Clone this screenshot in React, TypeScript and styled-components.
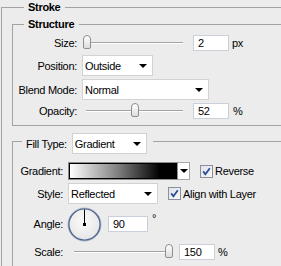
import React from 'react';
import styled, { createGlobalStyle } from 'styled-components';

const GlobalStyle = createGlobalStyle`
  html, body {
    margin: 0;
    background: #ececec;
    overflow: hidden;
  }
  body {
    font-family: 'Liberation Sans', Arial, sans-serif;
    font-size: 11px;
    letter-spacing: -0.3px;
    color: #000;
  }
`;

// the dialog continues past the visible crop, so the frame clips it
const Page = styled.div`
  box-sizing: border-box;
  width: 281px;
  height: 266px;
  padding-left: 1px;
  overflow: hidden;
`;

const Group = styled.fieldset<{ $mt?: number; $pad: string }>`
  margin: ${({ $mt }) => $mt || 0}px -30px 0 0;
  padding: ${({ $pad }) => $pad};
  border: 1px solid #a3a3a3;
  min-width: 0;
`;

const Legend = styled.legend<{ $indent: number; $bold?: boolean }>`
  margin-left: ${({ $indent }) => $indent}px;
  padding: 0 5px 0 4px;
  line-height: 14px;
  font-weight: ${({ $bold }) => ($bold ? 'bold' : 'normal')};
`;

const ControlLegend = styled.legend`
  display: flex;
  align-items: center;
  gap: 5px;
  margin-left: 9px;
  padding: 4px 6px 0 4px;
`;

const Row = styled.div<{ $h: number; $mt?: number }>`
  display: flex;
  align-items: center;
  height: ${({ $h }) => $h}px;
  margin-top: ${({ $mt }) => $mt || 0}px;
`;

const Label = styled.span<{ $w: number }>`
  width: ${({ $w }) => $w}px;
  flex-shrink: 0;
  text-align: right;
  margin-right: 5px;
  white-space: nowrap;
`;

const SelectBox = styled.div<{ $w: number; $ml?: number }>`
  display: flex;
  align-items: center;
  justify-content: space-between;
  box-sizing: border-box;
  width: ${({ $w }) => $w}px;
  height: 21px;
  margin-left: ${({ $ml }) => $ml || 0}px;
  padding: 0 5px 0 2px;
  background: #fff;
  border: 1px solid #d2d2d2;
  white-space: nowrap;
`;

const DownArrow = styled.span`
  width: 0;
  height: 0;
  border-left: 4px solid transparent;
  border-right: 4px solid transparent;
  border-top: 4px solid #000;
`;

const NumberField = styled.input<{ $w: number; $ml: number }>`
  box-sizing: border-box;
  width: ${({ $w }) => $w}px;
  height: 16px;
  margin: 0 0 0 ${({ $ml }) => $ml}px;
  padding: 0 0 0 4px;
  border: 1px solid #c9d0d8;
  background: #fff;
  font: inherit;
  letter-spacing: inherit;
  color: #000;
  outline: none;
`;

const Unit = styled.span<{ $ml: number; $top?: boolean }>`
  margin-left: ${({ $ml }) => $ml}px;
  align-self: ${({ $top }) => ($top ? 'flex-start' : 'center')};
  margin-top: ${({ $top }) => ($top ? '6px' : '0')};
`;

const SliderTrack = styled.div<{ $w: number; $ml: number }>`
  position: relative;
  width: ${({ $w }) => $w}px;
  height: 15px;
  margin-left: ${({ $ml }) => $ml}px;
  flex-shrink: 0;

  &::before {
    content: '';
    position: absolute;
    left: 3px;
    right: 0;
    top: 7px;
    height: 1px;
    background: #a4a4a4;
    border-bottom: 1px solid #fff;
  }
`;

const Thumb = styled.div`
  position: absolute;
  top: 0;
  box-sizing: border-box;
  width: 8px;
  height: 14px;
  border: 1px solid #8e8e8e;
  border-radius: 4px 4px 2px 2px;
  background: linear-gradient(#ffffff, #dcdcdc);
`;

const GradientPicker = styled.div`
  display: flex;
  height: 18px;
`;

const Swatch = styled.div`
  box-sizing: border-box;
  width: 110px;
  height: 18px;
  border: 1px solid #8c8c8c;
`;

const SwatchFill = styled.div`
  box-sizing: border-box;
  height: 100%;
  border: 1px solid #000;
  background: linear-gradient(to right, #ffffff 0%, #808080 45%, #000000 85%);
`;

const ArrowButton = styled.div`
  display: flex;
  align-items: center;
  justify-content: center;
  box-sizing: border-box;
  width: 12px;
  height: 18px;
  background: #fff;
  border: 1px solid #a8a8a8;
  border-left: none;
`;

const Check = styled.label<{ $ml: number }>`
  display: flex;
  align-items: center;
  gap: 2px;
  margin-left: ${({ $ml }) => $ml}px;
  white-space: nowrap;
`;

const Dial = styled.svg`
  margin-left: -1px;
  flex-shrink: 0;
`;

const Slider: React.FC<{ w: number; ml: number; pct: number }> = ({ w, ml, pct }) => (
  <SliderTrack $w={w} $ml={ml}>
    <Thumb style={{ left: Math.round(pct * (w - 8)) }} />
  </SliderTrack>
);

const Select: React.FC<{ w: number; ml?: number; value: string }> = ({ w, ml, value }) => (
  <SelectBox $w={w} $ml={ml}>
    <span>{value}</span>
    <DownArrow />
  </SelectBox>
);

const CheckBox: React.FC<{ ml: number; label: string }> = ({ ml, label }) => (
  <Check $ml={ml}>
    <svg width="13" height="13" viewBox="0 0 13 13">
      <defs>
        <linearGradient id="cb" x1="0" y1="0" x2="1" y2="1">
          <stop offset="0" stopColor="#dfe3ea" />
          <stop offset="1" stopColor="#f6f7f9" />
        </linearGradient>
      </defs>
      <rect x="0.5" y="0.5" width="12" height="12" fill="url(#cb)" stroke="#8a8f99" />
      <path d="M3.2 6.4 L5.4 9.2 L9.8 3.2" fill="none" stroke="#2c4c94" strokeWidth="1.8" />
    </svg>
    <span>{label}</span>
  </Check>
);

const App: React.FC = () => {
  return (
    <Page>
      <GlobalStyle />
      <Group $pad="3px 0 0 10px">
        <Legend $indent={12} $bold>Stroke</Legend>

        <Group $pad="3px 0 6px 0">
          <Legend $indent={11} $bold>Structure</Legend>

          <Row $h={17}>
            <Label $w={64}>Size:</Label>
            <Slider w={100} ml={1} pct={0} />
            <NumberField $w={36} $ml={10} readOnly value="2" />
            <Unit $ml={3}>px</Unit>
          </Row>
          <Row $h={21} $mt={4}>
            <Label $w={64}>Position:</Label>
            <Select w={71} value="Outside" />
          </Row>
          <Row $h={21} $mt={3}>
            <Label $w={64}>Blend Mode:</Label>
            <Select w={127} value="Normal" />
          </Row>
          <Row $h={17} $mt={2}>
            <Label $w={64}>Opacity:</Label>
            <Slider w={100} ml={1} pct={0.52} />
            <NumberField $w={36} $ml={10} readOnly value="52" />
            <Unit $ml={4}>%</Unit>
          </Row>
        </Group>

        <Group $mt={3} $pad="8px 0 30px 0">
          <ControlLegend>
            <span>Fill Type:</span>
            <Select w={75} value="Gradient" />
          </ControlLegend>

          <Row $h={18}>
            <Label $w={50}>Gradient:</Label>
            <GradientPicker>
              <Swatch>
                <SwatchFill />
              </Swatch>
              <ArrowButton>
                <DownArrow />
              </ArrowButton>
            </GradientPicker>
            <CheckBox ml={10} label="Reverse" />
          </Row>
          <Row $h={21} $mt={3}>
            <Label $w={50}>Style:</Label>
            <Select w={90} value="Reflected" />
            <CheckBox ml={10} label="Align with Layer" />
          </Row>
          <Row $h={36} $mt={2}>
            <Label $w={50}>Angle:</Label>
            <Dial width="35" height="35" viewBox="0 0 35 35">
              <defs>
                <radialGradient id="dialFill" cx="0.45" cy="0.4" r="0.6">
                  <stop offset="0" stopColor="#fbfbfb" />
                  <stop offset="1" stopColor="#e6e6e6" />
                </radialGradient>
              </defs>
              <circle cx="17.5" cy="17.5" r="16.6" fill="none" stroke="#b9c2d6" strokeWidth="1" />
              <circle cx="17.5" cy="17.5" r="15.6" fill="url(#dialFill)" stroke="#54658f" strokeWidth="1.4" />
              <line x1="17.5" y1="2.5" x2="17.5" y2="17.5" stroke="#000" strokeWidth="1" />
              <rect x="16" y="16" width="3" height="3" fill="#000" />
            </Dial>
            <NumberField $w={40} $ml={6} readOnly value="90" />
            <Unit $ml={4} $top>°</Unit>
          </Row>
          <Row $h={17} $mt={1}>
            <Label $w={50}>Scale:</Label>
            <Slider w={102} ml={3} pct={1} />
            <NumberField $w={36} $ml={6} readOnly value="150" />
            <Unit $ml={3}>%</Unit>
          </Row>
        </Group>
      </Group>
    </Page>
  );
};

export default App;
